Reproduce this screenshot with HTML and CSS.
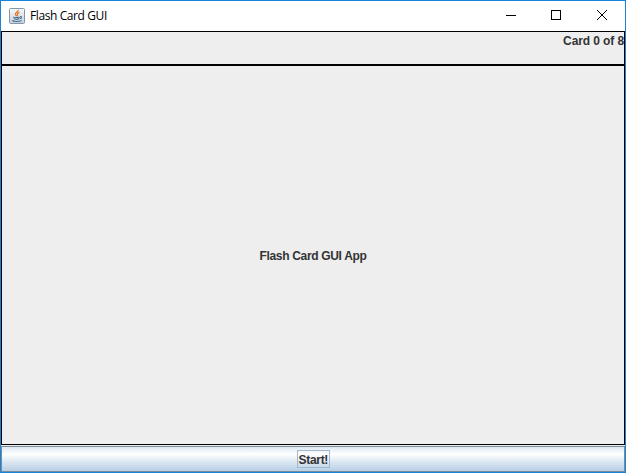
FILE: index.html
```html
<!DOCTYPE html>
<html lang="en">
<head>
<meta charset="utf-8">
<title>Flash Card GUI</title>
<link rel="stylesheet" href="styles.css">
</head>
<body>
<div class="window">
  <header class="titlebar">
    <svg class="app-icon" width="16" height="16" viewBox="0 0 16 16" fill="none">
      <defs><linearGradient id="tile" x1="0" y1="0" x2="0" y2="1"><stop offset="0" stop-color="#f8fafb"/><stop offset="1" stop-color="#c3d0dc"/></linearGradient></defs>
      <rect x=".5" y=".5" width="15" height="15" rx="1" fill="url(#tile)" stroke="#8496a8"/>
      <path d="M9.300 1.800C9.600 3.600 5.900 4.400 6.400 6.200c.2.8 1 1.200 1 2M10.500 4.300C8.700 5 7.900 5.600 8.500 6.600c.4.6.2 1.100-.3 1.600" stroke="#e4782c" stroke-width="1.300"/>
      <path d="M4 8.900c1.200.8 5 .8 6.700 0M4.800 10.600c1.300.7 4.200.7 5.400 0M11 8.500c2.200-.3 1.900 2-.2 2.300M3.300 12.500c1.500 1.300 7.500 1.300 9.200-.2" stroke="#486f90" stroke-width="1.100"/>
    </svg>
    <span class="title">Flash Card GUI</span>
    <div class="controls">
      <svg width="46" height="30" viewBox="0 0 46 30"><path d="M19 14.500h10" stroke="#000"/></svg>
      <svg width="46" height="30" viewBox="0 0 46 30"><rect x="18.500" y="9.500" width="9" height="9" fill="none" stroke="#000"/></svg>
      <svg width="46" height="30" viewBox="0 0 46 30"><path d="M18 9l10 10M28 9l-10 10" stroke="#000"/></svg>
    </div>
  </header>
  <section class="status"><span class="count">Card 0 of 8</span></section>
  <main class="card"><span class="card-text">Flash Card GUI App</span></main>
  <button class="start"><span class="start-label"><span class="start-text">Start!</span></span></button>
</div>
</body>
</html>
```
FILE: styles.css
```css
* { box-sizing: border-box; }
body { margin: 0; }
.window {
  width: 626px;
  height: 473px;
  border: 1px solid #1883d7;
  background: #eee;
  display: flex;
  flex-direction: column;
  color: #333;
  font: bold 12px/14px "Liberation Sans", Arial, sans-serif;
}
.titlebar {
  height: 30px;
  flex: none;
  display: flex;
  align-items: center;
  background: #fff;
  padding-left: 8px;
}
.app-icon { flex: none; margin-top: -1px; }
.title {
  margin-left: 5px;
  color: #000;
  font: 12px/16px "Open Sans", "Noto Sans", sans-serif;
  letter-spacing: -0.4px;
}
.controls { display: flex; margin-left: auto; }
.status {
  height: 34px;
  flex: none;
  border: 1px solid #000;
  display: flex;
  justify-content: flex-end;
  padding-top: 2px;
}
.count { letter-spacing: -0.1px; }
.card {
  flex: 1;
  border: 1px solid #000;
  display: flex;
  align-items: center;
  justify-content: center;
  padding-top: 2px;
}
.card-text { letter-spacing: -0.33px; }
.start {
  height: 26px;
  flex: none;
  margin: 1px 0 0;
  padding: 0;
  border: 1px solid #7a8a99;
  background: linear-gradient(#dde8f3 0%, #fff 30%, #dde8f3 60%, #b8cfe5 100%);
  display: flex;
  align-items: center;
  justify-content: center;
  font: inherit;
  color: inherit;
}
.start-label {
  width: 33px;
  height: 18px;
  border: 1px solid #a3b8cc;
  padding: 2px 0 0 1px;
  text-align: left;
  letter-spacing: -0.3px;
  white-space: nowrap;
}
```
